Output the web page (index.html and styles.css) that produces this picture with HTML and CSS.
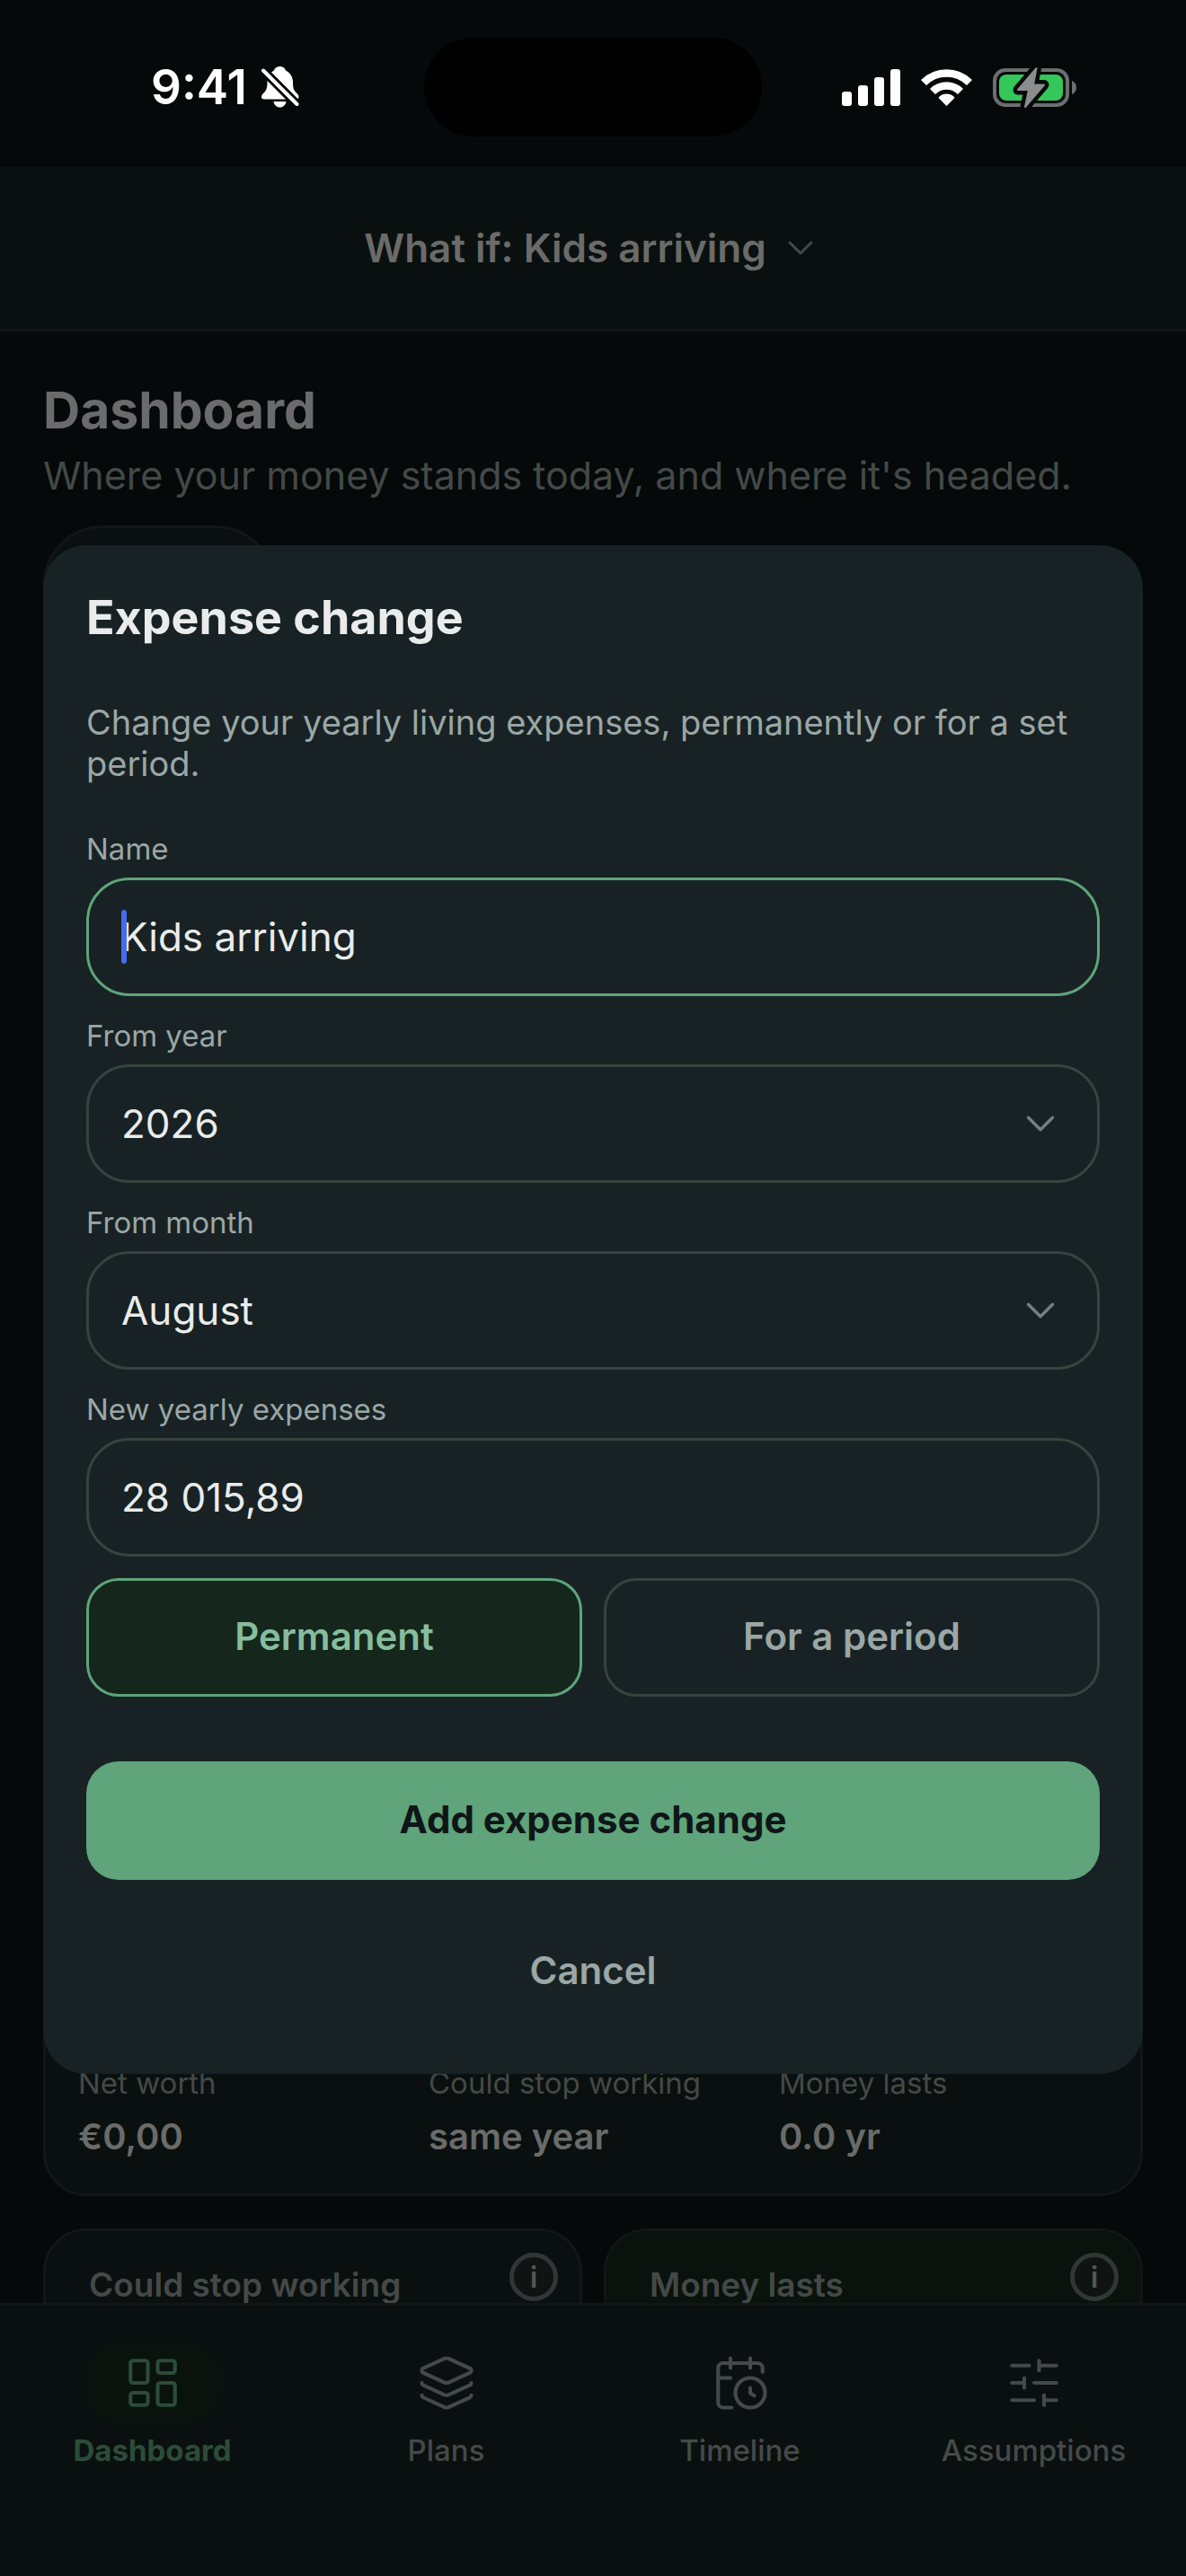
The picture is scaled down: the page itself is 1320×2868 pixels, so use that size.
FILE: index.html
```html
<!DOCTYPE html>
<html lang="en">
  <head>
    <meta charset="UTF-8" />
    <meta name="viewport" content="width=device-width, initial-scale=1.0" />
    <title>Dashboard</title>
    <link rel="stylesheet" href="styles.css">
  </head>
  <body>
    <div class="app">
      <div class="status-bar">
        <div class="status-left">
          <span class="clock">9:41</span>
          <svg class="bell" viewBox="0 0 42 46">
            <path fill="#fff" d="M20.500 0c4 0 6 2.500 6.500 4.500 5 2.500 8 7 8 13 0 7 1 9 4 12 2 2 2.500 3 2.500 4.500 0 1.500-1 2.500-3 2.500H3c-2 0-3-1-3-2.500 0-2 1-3 3-5 2.500-2.500 3.500-5 3.500-11.500 0-6 3-10.500 7.500-13C14.500 2.500 16.500 0 20.500 0z" />
            <path fill="#fff" d="M13.500 39h14c-.5 4-3.500 6.500-7 6.500s-6.500-2.500-7-6.500z" />
            <path class="bell-gap" d="M-1 1.500 43 45.500" />
            <path class="bell-slash" d="M2 4.500 39.500 42" />
          </svg>
        </div>
        <div class="island"></div>
        <div class="status-right">
          <svg class="signal" viewBox="0 0 65 41" fill="#fff">
            <rect x="0" y="25" width="11" height="16" rx="3" />
            <rect x="18" y="18" width="11" height="23" rx="3" />
            <rect x="36" y="9" width="11" height="32" rx="3" />
            <rect x="54" y="0" width="11" height="41" rx="3" />
          </svg>
          <svg class="wifi" viewBox="0 0 57 42">
            <path fill="none" stroke="#fff" stroke-width="8.500" d="M3 16a36 36 0 0 1 51 0M13 26a22 22 0 0 1 31 0" />
            <path fill="#fff" d="M20 33.500c-.5-.6-.4-1.200.3-1.700a12 12 0 0 1 16.400 0c.7.5.8 1.100.3 1.700L28.500 42z" />
          </svg>
          <svg class="battery" viewBox="0 0 93 43">
            <rect x="2" y="2" width="81" height="39" rx="12" fill="none" stroke="#6c6e6f" stroke-width="4" />
            <rect x="7" y="7" width="71" height="29" rx="8" fill="#34c759" />
            <path fill="#6c6e6f" d="M88 14c3 1 5 4 5 7.500S91 28 88 29z" />
            <path class="bolt-gap" d="M48.500 0 28 24h12l-4 19 21-24.500H45z" />
            <path class="bolt" d="M48.500 0 28 24h12l-4 19 21-24.500H45z" />
          </svg>
        </div>
      </div>

      <header class="plan-bar">
        <button class="plan-switch" type="button">
          <span>What if: Kids arriving</span>
          <svg class="chevron chevron-small" viewBox="0 0 24 24"><path d="m6 9 6 6 6-6" /></svg>
        </button>
      </header>

      <main class="content">
        <h1 class="page-title">Dashboard</h1>
        <p class="page-subtitle">Where your money stands today, and where it's headed.</p>
        <div class="pill"></div>

        <section class="card summary">
          <div class="chart"></div>
          <dl class="metrics">
            <div class="metric">
              <dt>Net worth</dt>
              <dd>€0,00</dd>
            </div>
            <div class="metric">
              <dt>Could stop working</dt>
              <dd>same year</dd>
            </div>
            <div class="metric">
              <dt>Money lasts</dt>
              <dd>0.0 yr</dd>
            </div>
          </dl>
        </section>

        <div class="tiles">
          <section class="card tile">
            <h2 class="tile-title">Could stop working</h2>
            <button class="info" type="button">i</button>
          </section>
          <section class="card tile tile-green">
            <h2 class="tile-title">Money lasts</h2>
            <button class="info" type="button">i</button>
          </section>
        </div>
      </main>

      <nav class="tab-bar">
        <a class="tab active" href="#dashboard">
          <span class="tab-icon">
            <svg viewBox="0 0 24 24">
              <rect x="3" y="3" width="7" height="9" rx="1" />
              <rect x="14" y="3" width="7" height="5" rx="1" />
              <rect x="14" y="12" width="7" height="9" rx="1" />
              <rect x="3" y="16" width="7" height="5" rx="1" />
            </svg>
          </span>
          <span>Dashboard</span>
        </a>
        <a class="tab" href="#plans">
          <span class="tab-icon">
            <svg viewBox="0 0 24 24">
              <path d="M12.830 2.180a2 2 0 0 0-1.660 0L2.600 6.080a1 1 0 0 0 0 1.830l8.580 3.910a2 2 0 0 0 1.660 0l8.580-3.900a1 1 0 0 0 0-1.830z" />
              <path d="M2 12a1 1 0 0 0 .58.91l8.600 3.910a2 2 0 0 0 1.650 0l8.580-3.900A1 1 0 0 0 22 12" />
              <path d="M2 17a1 1 0 0 0 .58.91l8.600 3.910a2 2 0 0 0 1.650 0l8.580-3.900A1 1 0 0 0 22 17" />
            </svg>
          </span>
          <span>Plans</span>
        </a>
        <a class="tab" href="#timeline">
          <span class="tab-icon">
            <svg viewBox="0 0 24 24">
              <path d="M16 14v2.200l1.600 1M16 2v4M8 2v4M3 10h5" />
              <path d="M21 7.500V6a2 2 0 0 0-2-2H5a2 2 0 0 0-2 2v14a2 2 0 0 0 2 2h3.500" />
              <circle cx="16" cy="16" r="6" />
            </svg>
          </span>
          <span>Timeline</span>
        </a>
        <a class="tab" href="#assumptions">
          <span class="tab-icon">
            <svg viewBox="0 0 24 24">
              <path d="M10 5H3M12 19H3M14 3v4M16 17v4M21 12h-9M21 19h-5M21 5h-7M8 10v4M8 12H3" />
            </svg>
          </span>
          <span>Assumptions</span>
        </a>
      </nav>
    </div>

    <div class="modal-wrap">
      <form class="modal" role="dialog" aria-labelledby="modalTitle">
        <h2 class="modal-title" id="modalTitle">Expense change</h2>
        <p class="modal-text">Change your yearly living expenses, permanently or for a set period.</p>

        <div class="field">
          <label for="name">Name</label>
          <div class="control">
            <input class="input focused" id="name" type="text" value="Kids arriving" />
            <span class="caret"></span>
          </div>
        </div>
        <div class="field">
          <label for="year">From year</label>
          <div class="control">
            <select class="input" id="year">
              <option>2026</option>
            </select>
            <svg class="chevron" viewBox="0 0 24 24"><path d="m6 9 6 6 6-6" /></svg>
          </div>
        </div>
        <div class="field">
          <label for="month">From month</label>
          <div class="control">
            <select class="input" id="month">
              <option>August</option>
            </select>
            <svg class="chevron" viewBox="0 0 24 24"><path d="m6 9 6 6 6-6" /></svg>
          </div>
        </div>
        <div class="field">
          <label for="expenses">New yearly expenses</label>
          <div class="control">
            <input class="input" id="expenses" type="text" value="28 015,89" />
          </div>
        </div>

        <div class="segments">
          <button class="btn segment selected" type="button">Permanent</button>
          <button class="btn segment" type="button">For a period</button>
        </div>
        <div class="actions">
          <button class="btn primary" type="button">Add expense change</button>
          <button class="btn cancel" type="button">Cancel</button>
        </div>
      </form>
    </div>
  </body>
</html>
```
FILE: styles.css
```css
:root {
  --bg: #050909;
  --surface: #0a100f;
  --line: #121615;
  --dim-text: #6a6b6a;
  --dim-muted: #444948;
  --modal: #182224;
  --text: #e9eceb;
  --muted: #9aa7a6;
  --border: #38433f;
  --green: #5fa47b;
}

* {
  margin: 0;
  padding: 0;
  box-sizing: border-box;
}

body {
  background: var(--bg);
  color: var(--text);
  font-family: Inter, "Liberation Sans", sans-serif;
}

button,
input,
select {
  font-family: inherit;
  border: none;
  background: none;
}

.app {
  display: flex;
  flex-direction: column;
  height: 100vh;
}

/* status bar */
.status-bar {
  display: grid;
  grid-template-columns: 1fr 376px 1fr;
  align-items: center;
  height: 186px;
  padding-bottom: 8px;
  color: #fff;
}

.status-left {
  display: flex;
  align-items: center;
  gap: 16px;
  padding-left: 168px;
}

.clock {
  font-size: 53px;
  font-weight: 600;
  line-height: 64px;
}

.bell {
  width: 42px;
  height: 46px;
}

.bell-gap,
.bell-slash {
  fill: none;
  stroke: var(--bg);
  stroke-width: 10;
}

.bell-slash {
  stroke: #fff;
  stroke-width: 4;
  stroke-linecap: round;
}

.island {
  height: 110px;
  margin-top: 16px;
  border-radius: 55px;
  background: #000;
}

.status-left,
.status-right {
  margin-top: 16px;
}

.status-right {
  display: flex;
  align-items: center;
  justify-content: flex-end;
  gap: 23px;
  padding-right: 122px;
}

.signal {
  width: 65px;
  height: 41px;
}

.wifi {
  width: 57px;
  height: 42px;
}

.battery {
  width: 93px;
  height: 43px;
  overflow: visible;
}

.bolt-gap,
.bolt {
  fill: #8a8c8d;
  stroke: #8a8c8d;
  stroke-width: 2;
  stroke-linejoin: round;
}

.bolt-gap {
  stroke: var(--bg);
  stroke-width: 11;
}

/* header */
.plan-bar {
  display: flex;
  justify-content: center;
  background: var(--surface);
  border-bottom: 3px solid var(--line);
}

.plan-switch {
  display: flex;
  align-items: center;
  gap: 14px;
  height: 180px;
  color: var(--dim-text);
  font-size: 44px;
  font-weight: 600;
}

.chevron {
  width: 54px;
  height: 54px;
  fill: none;
  stroke: #73807f;
  stroke-width: 1.5;
  stroke-linecap: round;
  stroke-linejoin: round;
}

.chevron-small {
  width: 48px;
  height: 48px;
  stroke: var(--dim-muted);
}

/* dashboard */
.content {
  flex: 1;
  min-height: 0;
  overflow: hidden;
  padding: 52px 48px 0;
}

.page-title {
  color: var(--dim-text);
  font-size: 57px;
  font-weight: 700;
  line-height: 72px;
}

.page-subtitle {
  color: var(--dim-muted);
  font-size: 43px;
  line-height: 72px;
}

.pill {
  width: 258px;
  height: 132px;
  margin: 20px 0 24px;
  border: 3px solid var(--line);
  border-radius: 66px;
  background: var(--surface);
}

.card {
  border: 3px solid var(--line);
  border-radius: 48px;
  background: var(--surface);
}

.summary {
  padding: 39px 36px;
}

.chart {
  height: 1516px;
}

.metrics {
  display: grid;
  grid-template-columns: repeat(3, 1fr);
  gap: 24px;
}

.metric {
  display: flex;
  flex-direction: column;
  gap: 16px;
}

.metric dt {
  color: var(--dim-muted);
  font-size: 33px;
  line-height: 40px;
}

.metric dd {
  color: var(--dim-text);
  font-size: 40px;
  font-weight: 600;
  line-height: 48px;
}

.tiles {
  display: grid;
  grid-template-columns: 1fr 1fr;
  gap: 24px;
  margin-top: 36px;
}

.tile {
  display: flex;
  align-items: flex-start;
  justify-content: space-between;
  height: 360px;
  padding: 24px 24px 0 48px;
}

.tile-green {
  background: #09120c;
}

.tile-title {
  padding-top: 12px;
  color: var(--dim-muted);
  font-size: 37px;
  font-weight: 600;
  line-height: 48px;
}

.info {
  width: 54px;
  height: 54px;
  border: 5px solid #313636;
  border-radius: 50%;
  background: #0f1413;
  color: #525655;
  font-size: 33px;
  font-weight: 600;
  line-height: 40px;
}

/* tab bar */
.tab-bar {
  display: grid;
  grid-template-columns: repeat(4, 1fr);
  height: 304px;
  padding: 41px 6px 0;
  border-top: 3px solid var(--line);
  background: var(--surface);
}

.tab {
  display: flex;
  flex-direction: column;
  align-items: center;
  gap: 10px;
  color: #454a49;
  font-size: 33px;
  font-weight: 500;
  line-height: 40px;
  text-decoration: none;
}

.tab.active {
  color: #2c4c39;
  font-weight: 700;
}

.tab-icon {
  display: flex;
  align-items: center;
  justify-content: center;
  width: 156px;
  height: 90px;
  border-radius: 45px;
}

.active .tab-icon {
  background: #09120c;
}

.tab-icon svg {
  width: 66px;
  height: 66px;
  fill: none;
  stroke: currentColor;
  stroke-width: 1.5;
  stroke-linecap: round;
  stroke-linejoin: round;
}

/* modal */
.modal-wrap {
  position: fixed;
  inset: 0;
  display: flex;
  align-items: center;
  justify-content: center;
  padding: 48px 48px 0;
}

.modal {
  width: 100%;
  padding: 48px;
  border-radius: 48px;
  background: var(--modal);
}

.modal-title {
  font-size: 52px;
  font-weight: 700;
  line-height: 66px;
}

.modal-text {
  margin: 60px 0 52px;
  color: var(--muted);
  font-size: 38px;
  line-height: 46px;
}

.field {
  margin-bottom: 24px;
}

.field label {
  display: block;
  margin-bottom: 12px;
  color: var(--muted);
  font-size: 33px;
  line-height: 40px;
}

.control {
  display: grid;
  align-items: center;
}

.control > * {
  grid-area: 1 / 1;
}

.input {
  width: 100%;
  height: 132px;
  padding: 0 36px;
  border: 3px solid var(--border);
  border-radius: 48px;
  color: var(--text);
  font-size: 44px;
  appearance: none;
  outline: none;
}

.input.focused {
  border-color: var(--green);
}

.control .chevron {
  justify-self: end;
  margin-right: 39px;
  pointer-events: none;
}

.caret {
  width: 6px;
  height: 60px;
  margin-left: 39px;
  border-radius: 3px;
  background: #466af0;
}

.segments {
  display: grid;
  grid-template-columns: 1fr 1fr;
  gap: 24px;
}

.btn {
  height: 132px;
  padding-bottom: 3px;
  border-radius: 36px;
  font-size: 42px;
  font-weight: 600;
}

.segment {
  border: 3px solid var(--border);
  color: var(--muted);
}

.segment.selected {
  border-color: var(--green);
  background: #15261d;
  color: #85bd9d;
}

.actions {
  display: flex;
  flex-direction: column;
  gap: 36px;
  margin-top: 72px;
}

.primary {
  background: var(--green);
  color: #0f1618;
  font-weight: 700;
}

.cancel {
  color: var(--muted);
}
```
